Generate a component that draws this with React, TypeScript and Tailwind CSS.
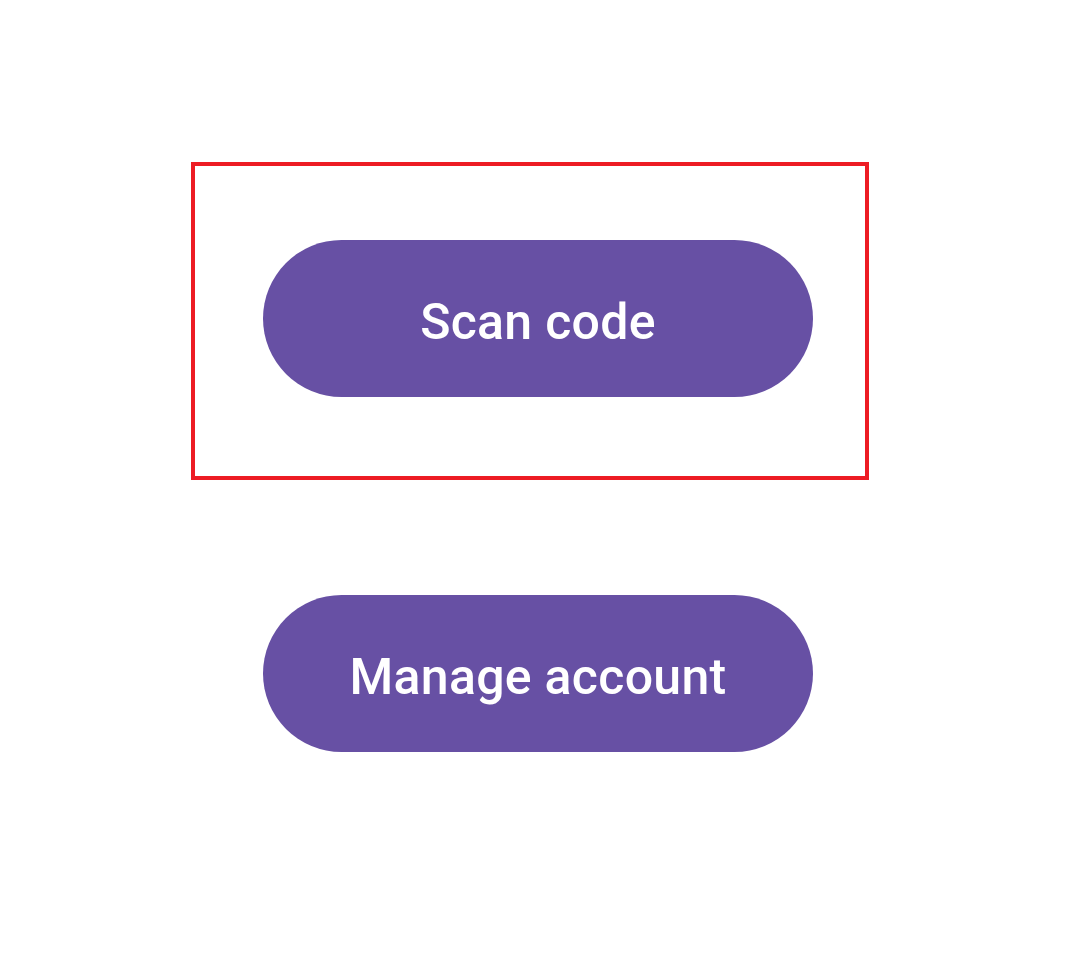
import React from 'react';

const PillButton = ({ label }: { label: string }) => (
  <button className="flex h-[157px] w-[550px] items-center justify-center rounded-full bg-[#6750a4] pt-[6px] text-[50px] font-medium leading-none tracking-[0.3px] text-white">
    {label}
  </button>
);

export default function App() {
  return (
    <div className="min-h-[960px] w-[1080px] bg-white font-['Roboto',sans-serif]">
      <div className="flex flex-col pt-[162px]">
        {/* Highlighted primary action */}
        <div className="ml-[191px] h-[318px] w-[678px] border-[4px] border-[#ed1c24] pl-[68px] pt-[74px]">
          <PillButton label="Scan code" />
        </div>

        <div className="ml-[263px] mt-[115px]">
          <PillButton label="Manage account" />
        </div>
      </div>
    </div>
  );
}
